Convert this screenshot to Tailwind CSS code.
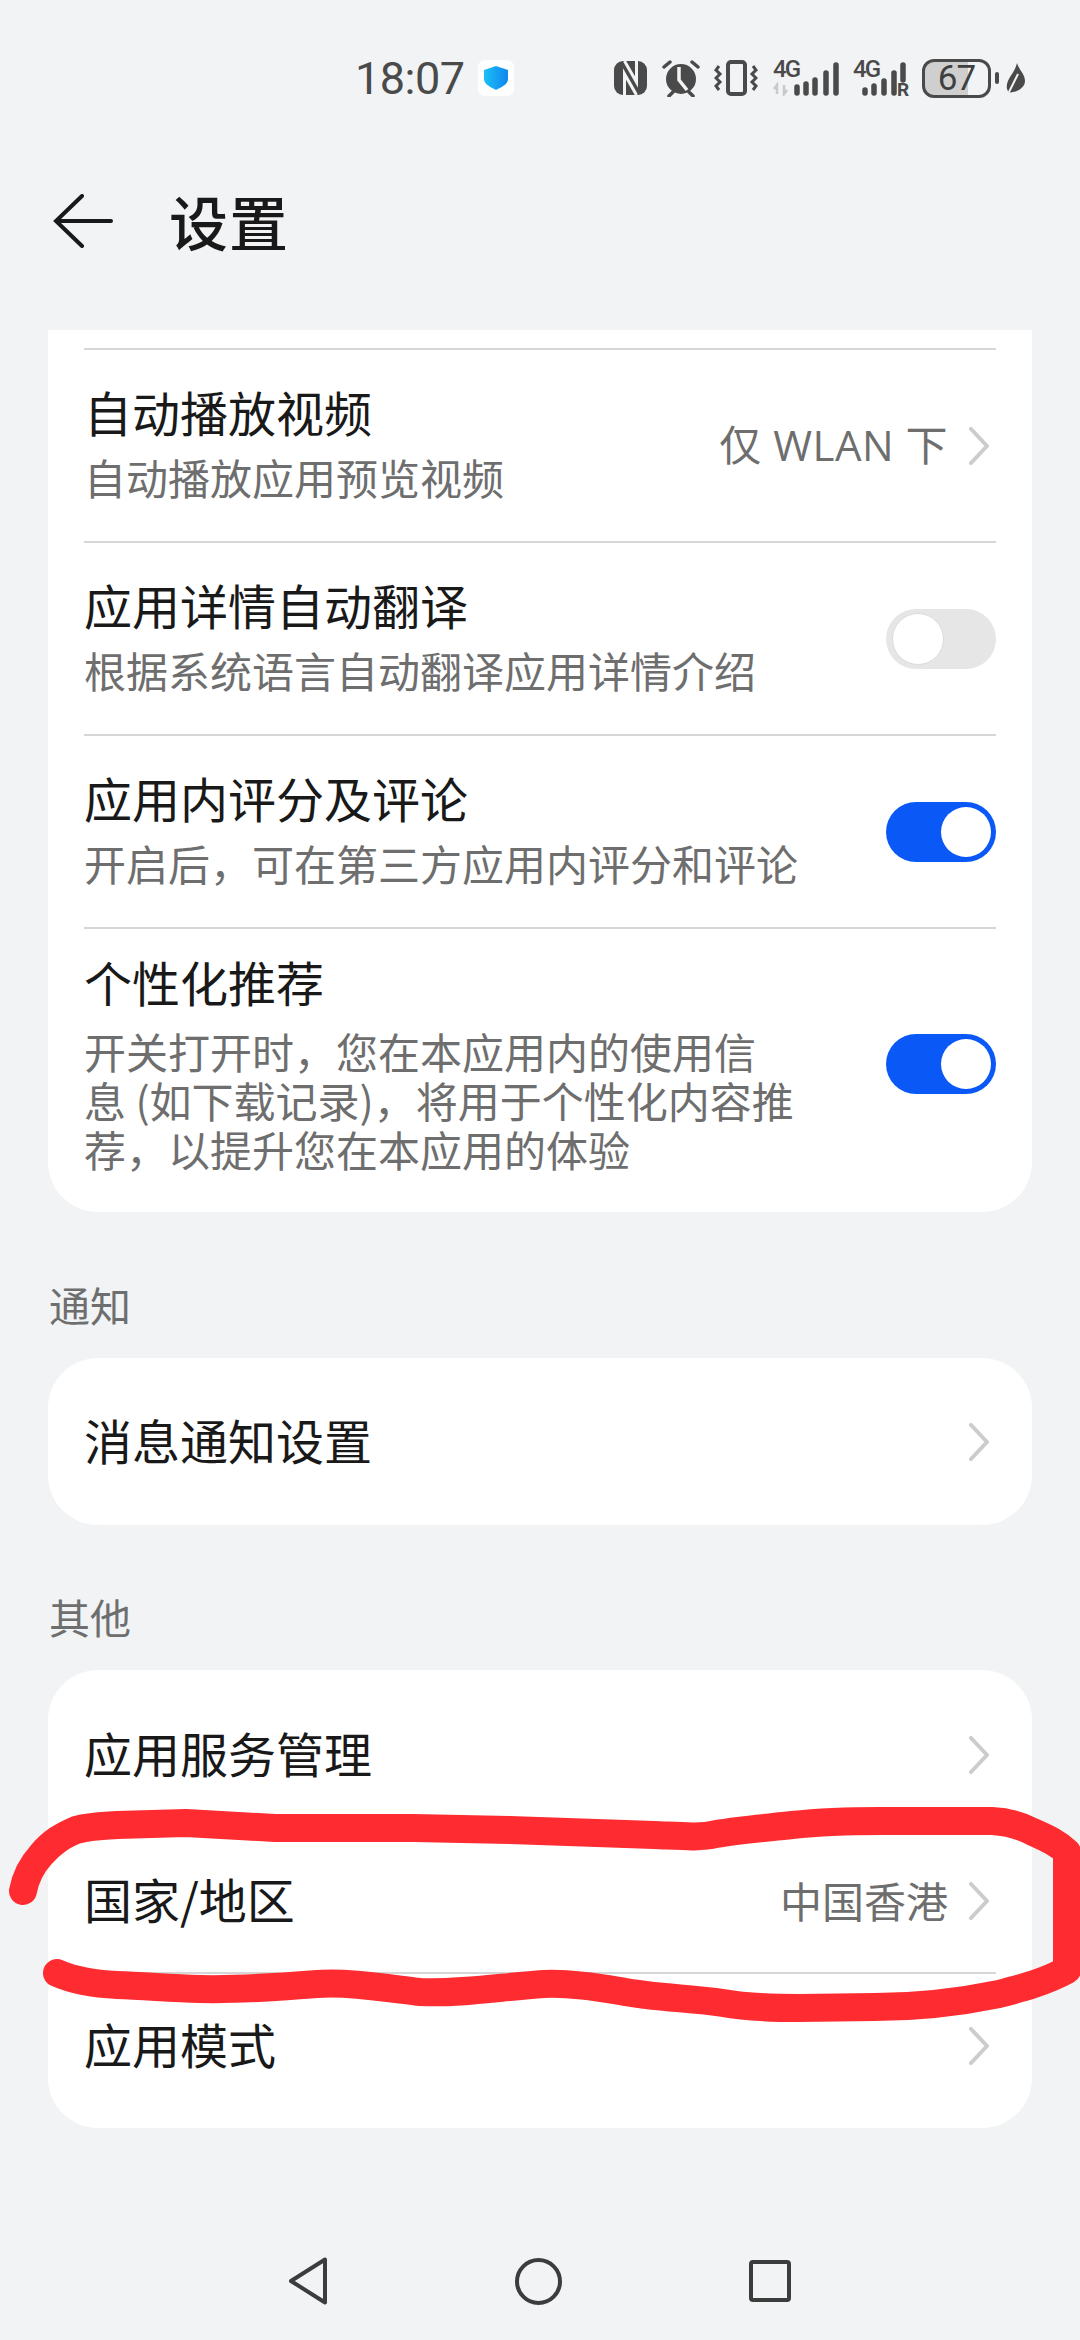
<!DOCTYPE html>
<html lang="zh-CN">
<head>
<meta charset="utf-8">
<script src="https://cdn.jsdelivr.net/npm/@tailwindcss/browser@4"></script>
</head>
<body class="m-0">
<div class="relative w-[1080px] h-[2340px] overflow-hidden bg-[#f1f3f5] font-['Noto_Sans_CJK_SC','Noto_Sans',sans-serif] text-[#191919]">

  <!-- status bar -->
  <div class="h-[156px] pl-[355px] flex items-center">
    <span class="font-['Roboto',sans-serif] text-[45px] leading-none tracking-[-0.5px] text-[#4a4a4a] w-[123px]">18:07</span>
    <svg class="w-[36px] h-[36px]" viewBox="0 0 36 36"><defs><linearGradient id="sh" x1="0" x2="1" y1="0" y2="0"><stop offset="0" stop-color="#1cc0f6"/><stop offset="1" stop-color="#0f86ef"/></linearGradient></defs><rect width="36" height="36" rx="7" fill="#fff"/><path d="M18 6l12 4v9c0 5-6 8-12 11C12 27 6 24 6 19v-9z" fill="url(#sh)"/></svg>
    <div class="ml-[100px] flex items-center text-[#4a4a4a]">
      <svg class="w-[33px] h-[34px]" viewBox="0 0 33 34"><rect width="33" height="34" rx="9" fill="#4a4a4a"/><path d="M10.5 34V13l12 21M22.5 0v21l-12-21" fill="none" stroke="#f1f3f5" stroke-width="3"/></svg>
      <svg class="w-[42px] h-[38px] ml-[13px]" viewBox="0 0 42 38"><circle cx="21" cy="20" r="15" fill="#4a4a4a"/><path d="M19 8v13l8 10" stroke="#f1f3f5" stroke-width="3.5" fill="none"/><path d="M4 8l6-5M38 8l-6-5M9 37l4-4M33 37l-4-4" stroke="#4a4a4a" stroke-width="3.5" stroke-linecap="round"/></svg>
      <svg class="w-[44px] h-[36px] ml-[12px]" viewBox="0 0 44 36" fill="none" stroke="#4a4a4a"><rect x="14" y="2" width="17" height="32" rx="3" stroke-width="4"/><path d="M5 6l-3 4 4 4-4 4 4 4-4 4 3 4M39 6l3 4-4 4 4 4-4 4 4 4-3 4" stroke-width="3"/></svg>
      <div class="relative w-[67px] h-[36px] ml-[15px]">
        <span class="absolute left-0 top-[-2px] font-['Roboto',sans-serif] font-medium text-[24px] leading-[22px] tracking-[-2px]">4G</span>
        <svg class="absolute left-0 top-0 w-[67px] h-[36px]" viewBox="0 0 67 36"><path d="M4 34V25L1 29M11 25v9l3-4" stroke="#c9c9c9" stroke-width="2.5" fill="none"/><g stroke="#4a4a4a" stroke-width="5.5" stroke-linecap="round"><path d="M24 33v-6M33 33v-9M42 33v-13M53 33V13M63 33V5"/></g></svg>
      </div>
      <div class="relative w-[57px] h-[36px] ml-[13px]">
        <span class="absolute left-0 top-[-2px] font-['Roboto',sans-serif] font-medium text-[24px] leading-[22px] tracking-[-2px]">4G</span>
        <svg class="absolute left-0 top-0 w-[57px] h-[36px]" viewBox="0 0 57 36"><g stroke="#4a4a4a" stroke-width="5.5" stroke-linecap="round"><path d="M12 33v-3M21 33v-7M31 33v-12M41 33V13M50 20V5"/></g></svg>
        <span class="absolute left-[44px] top-[21px] font-['Roboto',sans-serif] font-bold text-[19px] leading-[17px]">R</span>
      </div>
      <div class="relative w-[69px] h-[39px] ml-[12px] rounded-[12px] border-[3px] border-[#4a4a4a] overflow-hidden flex items-center justify-center bg-[linear-gradient(90deg,#cfcfcf_68%,transparent_68%)]">
        <span class="font-['Roboto',sans-serif] text-[35px] tracking-[-1px] leading-none text-[#3f3f3f]">67</span>
      </div>
      <svg class="w-[30px] h-[40px] ml-[4px]" viewBox="0 0 30 40"><rect x="0" y="14" width="4" height="12" rx="2" fill="#4a4a4a"/><path d="M22 5c2 7 8 11 8 18 0 6-6 10-12 11-3 1-5 0-6-3-2-9 8-16 10-26z" fill="#4a4a4a"/><path d="M14 34l9-18" stroke="#f1f3f5" stroke-width="2"/></svg>
    </div>
  </div>

  <!-- title bar -->
  <div class="h-[174px] flex items-start pl-[52px] pt-[38px] gap-[55px]">
    <svg class="w-[62px] h-[54px] shrink-0" viewBox="0 0 62 54" fill="none" stroke="#191919" stroke-width="4" stroke-linecap="round"><path d="M30 2L4 27l26 25M5 27h54"/></svg>
    <span class="text-[59px] leading-[54px] font-medium tracking-[1px]">设置</span>
  </div>

  <!-- content -->
  <div class="px-[48px]">
    <div class="bg-white rounded-b-[50px] px-[36px] pt-[18px]">
      <div class="border-t-2 border-[#d6d6d6] h-[193px] flex items-center justify-between">
        <div class="pb-[4px]">
          <div class="text-[48px] leading-[60px]">自动播放视频</div>
          <div class="text-[42px] leading-[58px] mt-[7px] text-[#6e6e6e]">自动播放应用预览视频</div>
        </div>
        <div class="flex items-center gap-[20px] text-[42px] text-[#6e6e6e] pr-[6px]"><span class="pb-[2px] tracking-[0.5px] font-['Open_Sans','Noto_Sans_CJK_SC',sans-serif]">仅 WLAN 下</span>
          <svg class="w-[22px] h-[38px]" viewBox="0 0 22 38" fill="none" stroke="#cccccc" stroke-width="4" stroke-linecap="round" stroke-linejoin="round"><path d="M3 2l16 17L3 36"/></svg>
        </div>
      </div>
      <div class="border-t-2 border-[#d6d6d6] h-[193px] flex items-center justify-between">
        <div class="pb-[4px]">
          <div class="text-[48px] leading-[60px]">应用详情自动翻译</div>
          <div class="text-[42px] leading-[58px] mt-[7px] text-[#6e6e6e]">根据系统语言自动翻译应用详情介绍</div>
        </div>
        <div class="w-[110px] h-[60px] rounded-full bg-[#e6e6e6] px-[6px] py-[4px] flex justify-start"><div class="w-[52px] h-[52px] rounded-full bg-white border border-[#dcdcdc]"></div></div>
      </div>
      <div class="border-t-2 border-[#d6d6d6] h-[193px] flex items-center justify-between">
        <div class="pb-[4px]">
          <div class="text-[48px] leading-[60px]">应用内评分及评论</div>
          <div class="text-[42px] leading-[58px] mt-[7px] text-[#6e6e6e]">开启后，可在第三方应用内评分和评论</div>
        </div>
        <div class="w-[110px] h-[60px] rounded-full bg-[#0a59f7] p-[5px] flex justify-end"><div class="w-[50px] h-[50px] rounded-full bg-white"></div></div>
      </div>
      <div class="border-t-2 border-[#d6d6d6] h-[285px] flex items-start justify-between pt-[22px]">
        <div class="w-[712px]">
          <div class="text-[48px] leading-[60px]">个性化推荐</div>
          <div class="text-[42px] leading-[49px] mt-[15px] text-[#6e6e6e]">开关打开时，您在本应用内的使用信<br>息 (如下载记录)，将用于个性化内容推<br>荐，以提升您在本应用的体验</div>
        </div>
        <div class="w-[110px] h-[60px] mt-[83px] rounded-full bg-[#0a59f7] p-[5px] flex justify-end"><div class="w-[50px] h-[50px] rounded-full bg-white"></div></div>
      </div>
    </div>

    <div class="h-[146px] flex items-end pb-[29px] pl-[1px] text-[41px] leading-[50px] text-[#6e6e6e]">通知</div>
    <div class="bg-white rounded-[50px] h-[167px] px-[36px] flex items-center justify-between">
      <span class="text-[48px] pb-[6px]">消息通知设置</span>
      <svg class="w-[22px] h-[38px] mr-[6px]" viewBox="0 0 22 38" fill="none" stroke="#cccccc" stroke-width="4" stroke-linecap="round" stroke-linejoin="round"><path d="M3 2l16 17L3 36"/></svg>
    </div>

    <div class="h-[145px] flex items-end pb-[29px] pl-[1px] text-[41px] leading-[50px] text-[#6e6e6e]">其他</div>
    <div class="bg-white rounded-[50px] px-[36px] pt-[12px] pb-[11px]">
      <div class="h-[145px] flex items-center justify-between">
        <span class="text-[48px] pb-[6px]">应用服务管理</span>
        <svg class="w-[22px] h-[38px] mr-[6px]" viewBox="0 0 22 38" fill="none" stroke="#cccccc" stroke-width="4" stroke-linecap="round" stroke-linejoin="round"><path d="M3 2l16 17L3 36"/></svg>
      </div>
      <div class="border-t-2 border-[#d6d6d6] h-[145px] flex items-center justify-between">
        <span class="text-[48px] pb-[6px]">国家/地区</span>
        <div class="flex items-center gap-[20px] text-[42px] text-[#6e6e6e] pr-[6px]"><span class="pb-[2px]">中国香港</span>
          <svg class="w-[22px] h-[38px]" viewBox="0 0 22 38" fill="none" stroke="#cccccc" stroke-width="4" stroke-linecap="round" stroke-linejoin="round"><path d="M3 2l16 17L3 36"/></svg>
        </div>
      </div>
      <div class="border-t-2 border-[#d6d6d6] h-[145px] flex items-center justify-between">
        <span class="text-[48px] pb-[6px]">应用模式</span>
        <svg class="w-[22px] h-[38px] mr-[6px]" viewBox="0 0 22 38" fill="none" stroke="#cccccc" stroke-width="4" stroke-linecap="round" stroke-linejoin="round"><path d="M3 2l16 17L3 36"/></svg>
      </div>
    </div>
  </div>

  <!-- nav bar -->
  <div class="absolute left-0 top-[2251px] w-full h-[60px] flex items-center justify-center gap-[187px] pr-[1px]">
    <svg class="w-[40px] h-[48px]" viewBox="0 0 40 48" fill="none" stroke="#3c3c3c" stroke-width="4" stroke-linejoin="round"><path d="M37 2.500v43L3 24z"/></svg>
    <svg class="w-[47px] h-[47px]" viewBox="0 0 47 47" fill="none" stroke="#3c3c3c" stroke-width="4"><circle cx="23.500" cy="23.500" r="21.500"/></svg>
    <svg class="w-[42px] h-[42px]" viewBox="0 0 42 42" fill="none" stroke="#3c3c3c" stroke-width="4" stroke-linejoin="round"><rect x="2" y="2" width="38" height="38" rx="2"/></svg>
  </div>

  <!-- red marker scribble -->
  <svg class="absolute left-0 top-0 pointer-events-none" width="1080" height="2340" viewBox="0 0 1080 2340" fill="none" stroke="#fe2c30" stroke-width="28" stroke-linecap="round" stroke-linejoin="round">
    <path d="M23 1891C26 1875 32 1865 41 1855C52 1842 62 1836 76 1830C90 1826 103 1826 117 1825L186 1823L275 1828L413 1828L510 1830L654 1835C680 1836 700 1838 716 1834C740 1830 765 1828 792 1825C820 1822 850 1821 881 1821L992 1821C1010 1822 1022 1826 1033 1832C1046 1838 1056 1842 1067 1852L1067 1970C1045 1982 1022 1988 999 1994C960 2002 915 2007 875 2007L799 2008C770 2008 745 2007 723 2003C690 1998 655 1998 620 1991C595 1987 570 1983 544 1984C500 1987 460 1994 420 1992C385 1988 350 1982 317 1984C280 1987 240 1990 200 1989C170 1988 145 1986 117 1985C95 1984 75 1981 57 1973"/>
  </svg>
</div>
</body>
</html>
